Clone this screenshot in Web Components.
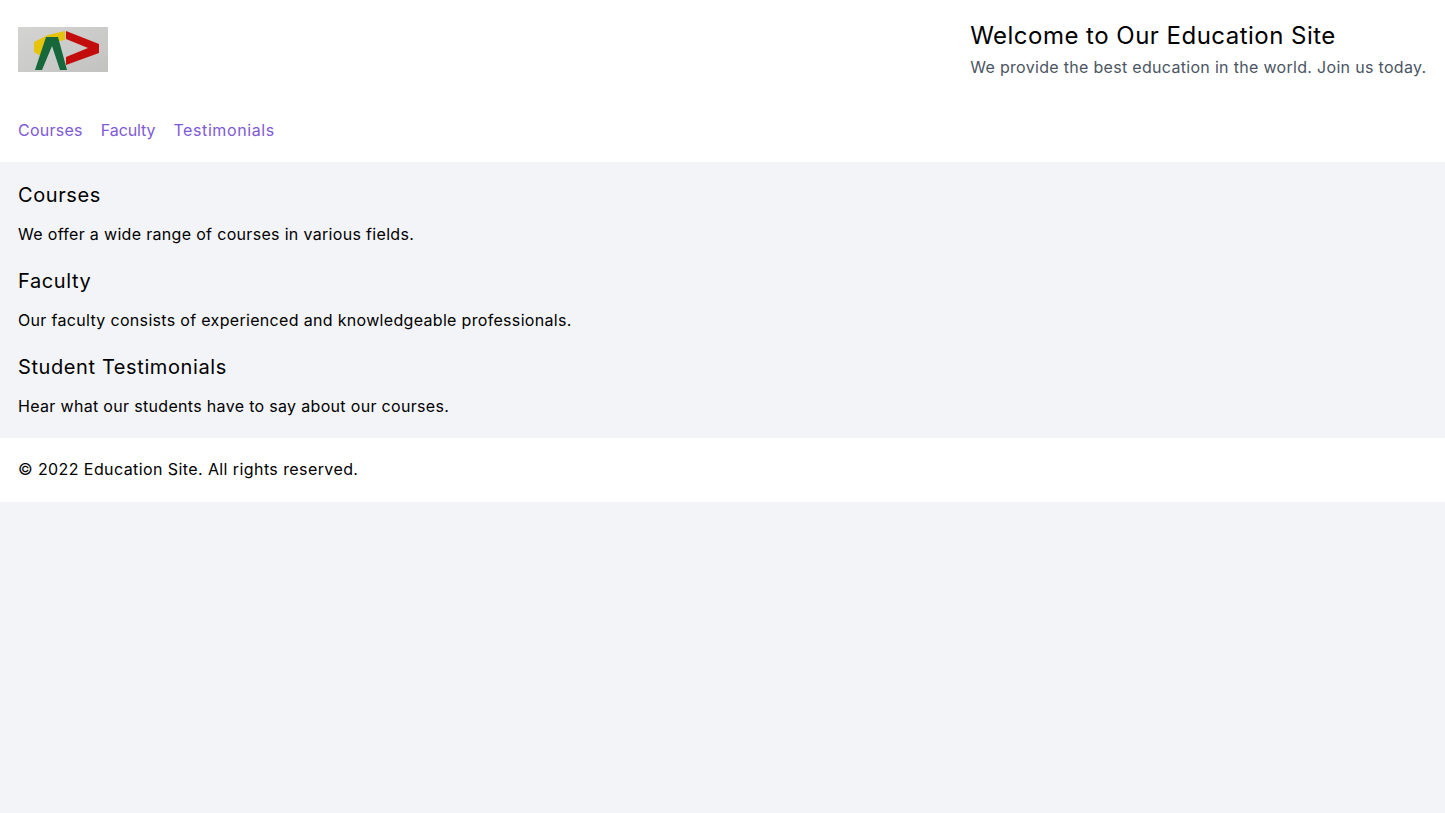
<!DOCTYPE html>
<html>
<head>
<meta charset="utf-8">
<title>Education Site</title>
<style>
  html, body { margin: 0; background: #f3f4f7; }
  body { font-family: Inter, "Liberation Sans", sans-serif; font-size: 16px; line-height: 24px; letter-spacing: 0.32px; color: #000; }
</style>
</head>
<body>
<site-header>
  <span slot="title">Welcome to Our Education Site</span>
  <span slot="tagline">We provide the best education in the world. Join us today.</span>
  <a slot="nav" href="#courses" style="letter-spacing:.26px">Courses</a>
  <a slot="nav" href="#faculty" style="letter-spacing:-.1px">Faculty</a>
  <a slot="nav" href="#testimonials" style="letter-spacing:.6px">Testimonials</a>
</site-header>
<site-main>
  <info-section heading="Courses">We offer a wide range of courses in various fields.</info-section>
  <info-section heading="Faculty">Our faculty consists of experienced and knowledgeable professionals.</info-section>
  <info-section heading="Student Testimonials">Hear what our students have to say about our courses.</info-section>
</site-main>
<site-footer>© 2022 Education Site. All rights reserved.</site-footer>

<script>
class SiteLogo extends HTMLElement {
    constructor() {
        super();
        this.attachShadow({ mode: "open" });
        this.shadowRoot.innerHTML = `
        <style>
            :host { display: block; width: 90px; height: 45px; margin-top: 1px; }
            svg { display: block; }
        </style>
        <svg width="90" height="45" viewBox="0 0 90 45" role="img" aria-label="Logo">
            <defs>
                <linearGradient id="bg" x1="0" y1="0" x2="1" y2="1">
                    <stop offset="0" stop-color="#d4d4d2"/>
                    <stop offset="1" stop-color="#c2c2c0"/>
                </linearGradient>
                <filter id="soft" x="-5%" y="-5%" width="110%" height="110%">
                    <feGaussianBlur stdDeviation="0.5"/>
                </filter>
            </defs>
            <rect width="90" height="45" fill="url(#bg)"/>
            <g filter="url(#soft)">
                <path d="M16 15 L30 8 L47 4 L47 13 L36 15 L24 30 L16 25 Z" fill="#e6c30e"/>
                <path d="M48 4 L81 17 L81 26 L48 38 L48 30 L70 21 L48 12 Z" fill="#c3100c"/>
                <path d="M28 10 L40 10 L49 43 L42 43 L34 19 L24 43 L17 43 Z" fill="#12683a"/>
            </g>
        </svg>
        `;
    }
}

class SiteHeader extends HTMLElement {
    constructor() {
        super();
        this.attachShadow({ mode: "open" });
        this.shadowRoot.innerHTML = `
        <style>
            :host { display: block; background: #fff; padding: 17px 18.5px 20px 18px; }
            .top { display: flex; justify-content: space-between; align-items: center; height: 63px; }
            .title { font-size: 24px; line-height: 36px; letter-spacing: 0.48px; color: #000; }
            .tagline { color: #4b5563; margin-top: 1px; padding-bottom: 1px; letter-spacing: 0.31px; }
            .title ::slotted(*), .tagline ::slotted(*) { display: block; }
            nav { display: flex; gap: 18px; margin-top: 38px; }
            ::slotted(a) { color: #805ad5; text-decoration: none; }
        </style>
        <div class="top">
            <site-logo></site-logo>
            <div>
                <div class="title"><slot name="title"></slot></div>
                <div class="tagline"><slot name="tagline"></slot></div>
            </div>
        </div>
        <nav><slot name="nav"></slot></nav>
        `;
    }
}

class SiteMain extends HTMLElement {
    constructor() {
        super();
        this.attachShadow({ mode: "open" });
        this.shadowRoot.innerHTML = `
        <style>
            :host { display: block; padding: 18px 18.5px 0 18px; }
        </style>
        <slot></slot>
        `;
    }
}

class InfoSection extends HTMLElement {
    constructor() {
        super();
        this.attachShadow({ mode: "open" });
    }

    connectedCallback() {
        const heading = this.getAttribute("heading") || "";
        this.shadowRoot.innerHTML = `
        <style>
            :host { display: block; margin-bottom: 20px; }
            h2 { margin: 0 0 12px; font-size: 20px; line-height: 30px; font-weight: 400; letter-spacing: 0.6px; }
            p { margin: 0; }
        </style>
        <h2>${heading}</h2>
        <p><slot></slot></p>
        `;
    }
}

class SiteFooter extends HTMLElement {
    constructor() {
        super();
        this.attachShadow({ mode: "open" });
        this.shadowRoot.innerHTML = `
        <style>
            :host { display: block; background: #fff; padding: 19px 18.5px 21px 18px; letter-spacing: 0.41px; }
        </style>
        <slot></slot>
        `;
    }
}

customElements.define("site-logo", SiteLogo);
customElements.define("site-header", SiteHeader);
customElements.define("site-main", SiteMain);
customElements.define("info-section", InfoSection);
customElements.define("site-footer", SiteFooter);
</script>
</body>
</html>
